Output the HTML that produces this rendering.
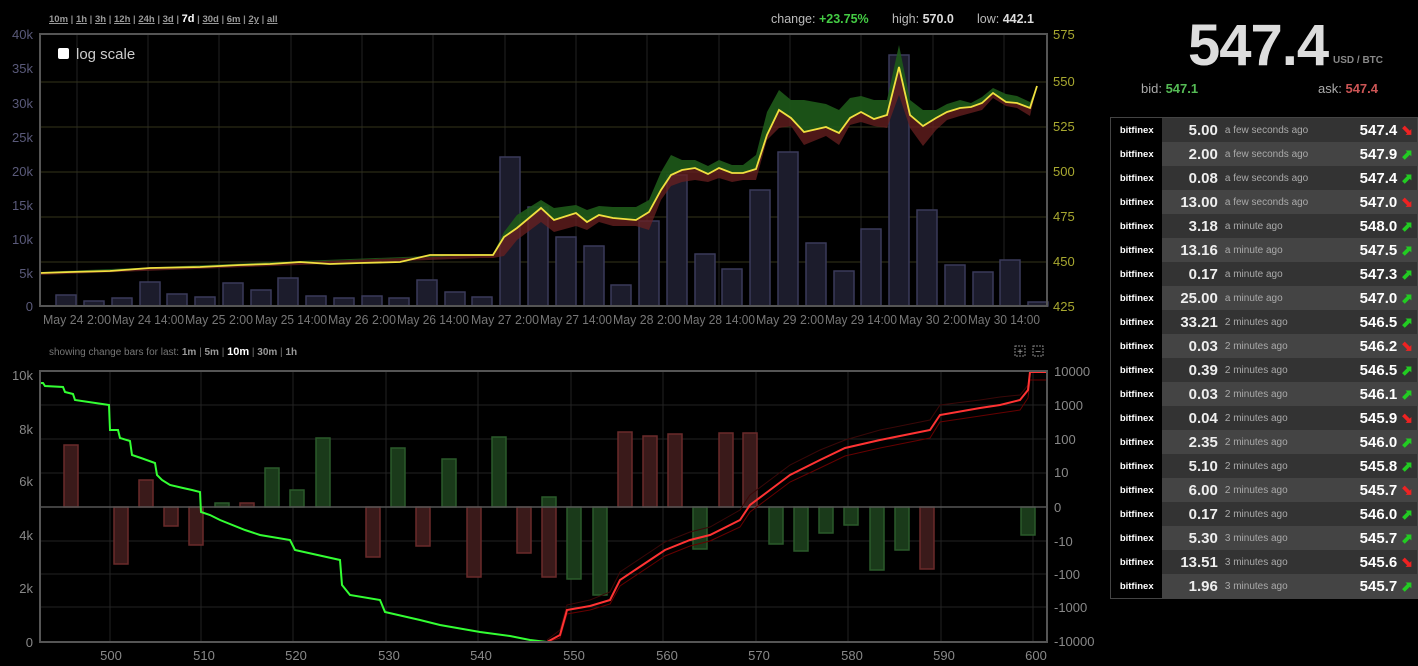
<!DOCTYPE html>
<html><head><meta charset="utf-8"><style>
body{margin:0;width:1418px;height:666px;background:#000;overflow:hidden;font-family:"Liberation Sans",sans-serif;position:relative}
.abs{position:absolute}
.rng{left:49px;top:13px;font-size:9.5px;color:#888;font-weight:bold}
.rng u{color:#999}
.rng b{color:#fff;font-size:11px;text-decoration:none}
.stat{top:12px;font-size:12.5px;color:#bbb}
table{border-collapse:collapse}
td{height:24px;padding:0;white-space:nowrap}
.n{width:52px;background:#000;color:#fff;font-weight:bold;font-size:9.5px;text-align:center}
.a{width:56px;text-align:right;color:#eee;font-weight:bold;font-size:15px}
.t{width:100px;color:#aaa;font-size:10px;padding-left:7px}
.p{width:74px;text-align:right;color:#fff;font-weight:bold;font-size:15px}
.r{width:20px;text-align:center;font-size:14px;font-weight:bold}
tr:nth-child(odd) .a,tr:nth-child(odd) .t,tr:nth-child(odd) .p,tr:nth-child(odd) .r{background:#333}
tr:nth-child(even) .a,tr:nth-child(even) .t,tr:nth-child(even) .p,tr:nth-child(even) .r{background:#444}
.up{color:#2c2}.dn{color:#e22}
</style></head><body>
<div class="abs rng"><u>10m</u> | <u>1h</u> | <u>3h</u> | <u>12h</u> | <u>24h</u> | <u>3d</u> | <b>7d</b> | <u>30d</u> | <u>6m</u> | <u>2y</u> | <u>all</u></div>
<div class="abs stat" style="left:771px">change: <b style="color:#4c4">+23.75%</b></div>
<div class="abs stat" style="left:892px">high: <b style="color:#ddd">570.0</b></div>
<div class="abs stat" style="left:977px">low: <b style="color:#ddd">442.1</b></div>

<svg class="abs" style="left:0;top:0" width="1100" height="666" font-family="Liberation Sans" >
<g stroke="#222" stroke-width="1">
<line x1="77" y1="34" x2="77" y2="306"/><line x1="148" y1="34" x2="148" y2="306"/><line x1="219" y1="34" x2="219" y2="306"/><line x1="291" y1="34" x2="291" y2="306"/><line x1="362" y1="34" x2="362" y2="306"/><line x1="433" y1="34" x2="433" y2="306"/><line x1="505" y1="34" x2="505" y2="306"/><line x1="576" y1="34" x2="576" y2="306"/><line x1="647" y1="34" x2="647" y2="306"/><line x1="719" y1="34" x2="719" y2="306"/><line x1="790" y1="34" x2="790" y2="306"/><line x1="861" y1="34" x2="861" y2="306"/><line x1="933" y1="34" x2="933" y2="306"/><line x1="1004" y1="34" x2="1004" y2="306"/>
</g>
<g stroke="#33331a" stroke-width="1"><line x1="40" y1="82" x2="1047" y2="82"/><line x1="40" y1="127" x2="1047" y2="127"/><line x1="40" y1="172" x2="1047" y2="172"/><line x1="40" y1="217" x2="1047" y2="217"/><line x1="40" y1="262" x2="1047" y2="262"/></g>
<g fill="#1c1c2c" stroke="#3a3a5a" stroke-width="1.5">
<rect x="56" y="295" width="20" height="11"/><rect x="84" y="301" width="20" height="5"/><rect x="112" y="298" width="20" height="8"/><rect x="140" y="282" width="20" height="24"/><rect x="167" y="294" width="20" height="12"/><rect x="195" y="297" width="20" height="9"/><rect x="223" y="283" width="20" height="23"/><rect x="251" y="290" width="20" height="16"/><rect x="278" y="278" width="20" height="28"/><rect x="306" y="296" width="20" height="10"/><rect x="334" y="298" width="20" height="8"/><rect x="362" y="296" width="20" height="10"/><rect x="389" y="298" width="20" height="8"/><rect x="417" y="280" width="20" height="26"/><rect x="445" y="292" width="20" height="14"/><rect x="472" y="297" width="20" height="9"/>
<rect x="500" y="157" width="20" height="149"/><rect x="528" y="207" width="20" height="99"/><rect x="556" y="237" width="20" height="69"/><rect x="584" y="246" width="20" height="60"/><rect x="611" y="285" width="20" height="21"/><rect x="639" y="221" width="20" height="85"/><rect x="667" y="175" width="20" height="131"/><rect x="695" y="254" width="20" height="52"/><rect x="722" y="269" width="20" height="37"/><rect x="750" y="190" width="20" height="116"/><rect x="778" y="152" width="20" height="154"/><rect x="806" y="243" width="20" height="63"/><rect x="834" y="271" width="20" height="35"/><rect x="861" y="229" width="20" height="77"/><rect x="889" y="55" width="20" height="251"/><rect x="917" y="210" width="20" height="96"/><rect x="945" y="265" width="20" height="41"/><rect x="973" y="272" width="20" height="34"/><rect x="1000" y="260" width="20" height="46"/><rect x="1028" y="302" width="20" height="4"/>
</g>
<polygon fill="#1e5a1a" opacity="0.9" points="40,272 300,261 480,254 493,254 504,232 517,215 541,200 554,208 576,205 587,210 599,206 613,207 636,207 649,200 661,172 671,155 682,160 695,160 708,166 719,160 732,165 743,165 756,155 767,112 779,90 791,100 804,100 826,104 839,110 850,98 861,96 874,100 887,100 899,45 910,100 923,110 936,110 947,104 960,100 971,103 982,97 993,88 1006,94 1017,96 1030,102 1037,86 1030,108 1017,103 1006,102 993,93 982,103 971,107 960,108 947,112 936,118 923,126 910,115 899,67 887,115 874,119 861,112 850,118 839,133 826,127 804,132 791,118 779,110 767,135 756,169 743,173 732,173 719,168 708,174 695,168 682,170 671,175 661,190 649,212 636,220 613,218 599,215 587,222 576,213 554,220 541,208 517,228 504,237 493,255 480,255 300,262 40,273"/>
<polygon fill="#6a2020" opacity="0.75" points="40,273 300,262 480,255 493,255 504,237 517,228 541,208 554,220 576,213 587,222 599,215 613,218 636,220 649,212 661,190 671,175 682,170 695,168 708,174 719,168 732,173 743,173 756,169 767,135 779,110 791,118 804,132 826,127 839,133 850,118 861,112 874,119 887,115 899,67 910,115 923,126 936,118 947,112 960,108 971,107 982,103 993,93 1006,102 1017,103 1030,108 1037,86 1030,116 1017,108 1006,106 993,98 982,110 971,113 960,116 947,120 936,130 923,146 910,128 899,95 887,128 874,126 861,122 850,125 839,145 826,136 804,145 791,126 779,128 767,140 756,180 743,180 732,182 719,178 708,182 695,180 682,182 671,186 661,200 649,230 636,226 613,226 599,222 587,230 576,226 554,232 541,222 517,240 504,256 493,258 480,258 300,265 40,275"/>
<polyline fill="none" stroke="#f0e040" stroke-width="1.8" points="40,273 70,272 110,271 150,268 200,267 240,265 270,264 300,262 330,264 360,263 400,262 430,255 480,255 493,255 504,237 517,228 541,208 554,220 576,213 587,222 599,215 613,218 636,220 649,212 661,190 671,175 682,170 695,168 708,174 719,168 732,173 743,173 756,169 767,135 779,110 791,118 804,132 826,127 839,133 850,118 861,112 874,119 887,115 899,67 910,115 923,126 936,118 947,112 960,108 971,107 982,103 993,93 1006,102 1017,103 1030,108 1037,86"/>
<path d="M40,306V34H1047V306Z" fill="none" stroke="#555" stroke-width="2"/>
<rect x="58" y="48" width="11" height="11" rx="2" fill="#fff"/>
<text x="76" y="59" fill="#ccc" font-size="15">log scale</text>
<g fill="#5a5a7a" font-size="13" text-anchor="end"><text x="33" y="39">40k</text><text x="33" y="73">35k</text><text x="33" y="108">30k</text><text x="33" y="142">25k</text><text x="33" y="176">20k</text><text x="33" y="210">15k</text><text x="33" y="244">10k</text><text x="33" y="278">5k</text><text x="33" y="311">0</text></g>
<g fill="#a8a830" font-size="13"><text x="1053" y="39">575</text><text x="1053" y="86">550</text><text x="1053" y="131">525</text><text x="1053" y="176">500</text><text x="1053" y="221">475</text><text x="1053" y="266">450</text><text x="1053" y="311">425</text></g>
<g fill="#777" font-size="12.5" text-anchor="middle" lengthAdjust="spacingAndGlyphs">
<text x="77" y="324" textLength="68" lengthAdjust="spacingAndGlyphs">May 24 2:00</text><text x="148" y="324" textLength="72" lengthAdjust="spacingAndGlyphs">May 24 14:00</text><text x="219" y="324" textLength="68" lengthAdjust="spacingAndGlyphs">May 25 2:00</text><text x="291" y="324" textLength="72" lengthAdjust="spacingAndGlyphs">May 25 14:00</text><text x="362" y="324" textLength="68" lengthAdjust="spacingAndGlyphs">May 26 2:00</text><text x="433" y="324" textLength="72" lengthAdjust="spacingAndGlyphs">May 26 14:00</text><text x="505" y="324" textLength="68" lengthAdjust="spacingAndGlyphs">May 27 2:00</text><text x="576" y="324" textLength="72" lengthAdjust="spacingAndGlyphs">May 27 14:00</text><text x="647" y="324" textLength="68" lengthAdjust="spacingAndGlyphs">May 28 2:00</text><text x="719" y="324" textLength="72" lengthAdjust="spacingAndGlyphs">May 28 14:00</text><text x="790" y="324" textLength="68" lengthAdjust="spacingAndGlyphs">May 29 2:00</text><text x="861" y="324" textLength="72" lengthAdjust="spacingAndGlyphs">May 29 14:00</text><text x="933" y="324" textLength="68" lengthAdjust="spacingAndGlyphs">May 30 2:00</text><text x="1004" y="324" textLength="72" lengthAdjust="spacingAndGlyphs">May 30 14:00</text></g>

<text x="49" y="355" fill="#777" font-size="10">showing change bars for last: <tspan fill="#999" font-weight="bold">1m</tspan> | <tspan fill="#999" font-weight="bold">5m</tspan> | <tspan fill="#fff" font-weight="bold" font-size="11">10m</tspan> | <tspan fill="#999" font-weight="bold">30m</tspan> | <tspan fill="#999" font-weight="bold">1h</tspan></text>
<rect x="1015" y="346" width="10" height="10" fill="none" stroke="#888" stroke-dasharray="2,1"/><text x="1020" y="355" fill="#aaa" font-size="10" text-anchor="middle">+</text>
<rect x="1033" y="346" width="10" height="10" fill="none" stroke="#888" stroke-dasharray="2,1"/><text x="1038" y="355" fill="#aaa" font-size="10" text-anchor="middle">−</text>

<g stroke="#222"><line x1="110" y1="371" x2="110" y2="642"/><line x1="201" y1="371" x2="201" y2="642"/><line x1="293" y1="371" x2="293" y2="642"/><line x1="386" y1="371" x2="386" y2="642"/><line x1="478" y1="371" x2="478" y2="642"/><line x1="571" y1="371" x2="571" y2="642"/><line x1="663" y1="371" x2="663" y2="642"/><line x1="756" y1="371" x2="756" y2="642"/><line x1="848" y1="371" x2="848" y2="642"/><line x1="941" y1="371" x2="941" y2="642"/><line x1="1033" y1="371" x2="1033" y2="642"/>
<line x1="40" y1="405" x2="1047" y2="405"/><line x1="40" y1="439" x2="1047" y2="439"/><line x1="40" y1="473" x2="1047" y2="473"/><line x1="40" y1="541" x2="1047" y2="541"/><line x1="40" y1="574" x2="1047" y2="574"/><line x1="40" y1="607" x2="1047" y2="607"/></g>
<g fill="#3a1a1a" stroke="#6a2a2a" stroke-width="1.5">
<rect x="64" y="445" width="14" height="62"/><rect x="139" y="480" width="14" height="27"/><rect x="240" y="503" width="14" height="4"/><rect x="618" y="432" width="14" height="75"/><rect x="643" y="436" width="14" height="71"/><rect x="668" y="434" width="14" height="73"/><rect x="719" y="433" width="14" height="74"/><rect x="743" y="433" width="14" height="74"/>
<rect x="114" y="507" width="14" height="57"/><rect x="164" y="507" width="14" height="19"/><rect x="189" y="507" width="14" height="38"/><rect x="366" y="507" width="14" height="50"/><rect x="416" y="507" width="14" height="39"/><rect x="467" y="507" width="14" height="70"/><rect x="517" y="507" width="14" height="46"/><rect x="542" y="507" width="14" height="70"/><rect x="920" y="507" width="14" height="62"/>
</g>
<g fill="#1a3a1a" stroke="#2a5a2a" stroke-width="1.5">
<rect x="215" y="503" width="14" height="4"/><rect x="265" y="468" width="14" height="39"/><rect x="290" y="490" width="14" height="17"/><rect x="316" y="438" width="14" height="69"/><rect x="391" y="448" width="14" height="59"/><rect x="442" y="459" width="14" height="48"/><rect x="492" y="437" width="14" height="70"/><rect x="542" y="497" width="14" height="10"/>
<rect x="567" y="507" width="14" height="72"/><rect x="593" y="507" width="14" height="88"/><rect x="693" y="507" width="14" height="42"/><rect x="769" y="507" width="14" height="37"/><rect x="794" y="507" width="14" height="44"/><rect x="819" y="507" width="14" height="26"/><rect x="844" y="507" width="14" height="18"/><rect x="870" y="507" width="14" height="63"/><rect x="895" y="507" width="14" height="43"/><rect x="1021" y="507" width="14" height="28"/>
</g>
<line x1="40" y1="507" x2="1047" y2="507" stroke="#555" stroke-width="1.5"/>
<polyline fill="none" stroke="#3a0808" stroke-width="1" points="547,640 560,630 567,605 590,600 610,592 620,572 650,552 665,542 690,532 710,527 740,510 750,495 770,480 790,465 820,450 845,440 880,430 930,420 940,405 980,400 1000,397 1020,395 1028,385 1030,372 1047,372"/>
<polyline fill="none" stroke="#600" stroke-width="1" points="547,642 560,638 567,614 590,610 610,604 620,586 650,566 665,556 690,546 710,541 740,527 750,512 770,497 790,482 820,468 845,456 880,448 930,438 940,422 980,416 1000,413 1020,410 1028,398 1030,380 1047,380"/>
<polyline fill="none" stroke="#3f3" stroke-width="2" points="40,383 43,383 45,386 63,387 65,392 73,394 75,400 109,405 110,430 118,430 120,438 130,441 132,455 141,458 155,463 157,475 162,480 170,485 183,488 192,490 200,492 201,512 210,515 220,520 245,530 260,535 290,540 295,550 340,560 342,585 350,595 380,600 385,612 420,620 440,625 480,632 510,636 530,640 547,642"/>
<polyline fill="none" stroke="#f33" stroke-width="2" points="547,642 560,635 567,610 590,606 610,600 620,580 650,560 665,550 690,540 710,535 740,520 750,505 770,490 790,475 820,460 845,448 880,440 930,430 940,415 980,408 1000,405 1020,400 1028,390 1030,372 1047,372"/>
<path d="M40,642V371H1047V642Z" fill="none" stroke="#555" stroke-width="2"/>
<g fill="#888" font-size="13" text-anchor="end"><text x="33" y="380">10k</text><text x="33" y="434">8k</text><text x="33" y="486">6k</text><text x="33" y="540">4k</text><text x="33" y="593">2k</text><text x="33" y="647">0</text></g>
<g fill="#888" font-size="13"><text x="1054" y="376">10000</text><text x="1054" y="410">1000</text><text x="1054" y="444">100</text><text x="1054" y="477">10</text><text x="1054" y="512">0</text><text x="1054" y="546">-10</text><text x="1054" y="579">-100</text><text x="1054" y="612">-1000</text><text x="1054" y="646">-10000</text></g>
<g fill="#888" font-size="13" text-anchor="middle"><text x="111" y="660">500</text><text x="204" y="660">510</text><text x="296" y="660">520</text><text x="389" y="660">530</text><text x="481" y="660">540</text><text x="574" y="660">550</text><text x="667" y="660">560</text><text x="759" y="660">570</text><text x="852" y="660">580</text><text x="944" y="660">590</text><text x="1036" y="660">600</text></g>
</svg>

<div class="abs" style="left:1188px;top:12px;font-size:58px;font-weight:bold;color:#ddd;letter-spacing:-1px">547.4</div>
<div class="abs" style="left:1333px;top:55px;font-size:10px;font-weight:bold;color:#888">USD / BTC</div>
<div class="abs" style="left:1141px;top:81px;font-size:13px;color:#aaa">bid: <b style="color:#5b5">547.1</b></div>
<div class="abs" style="left:1318px;top:81px;font-size:13px;color:#aaa">ask: <b style="color:#c55">547.4</b></div>
<table class="abs" style="left:1110px;top:117px;border:1px solid #444">
<tr><td class="n">bitfinex</td><td class="a">5.00</td><td class="t">a few seconds ago</td><td class="p">547.4</td><td class="r dn">⬊</td></tr>
<tr><td class="n">bitfinex</td><td class="a">2.00</td><td class="t">a few seconds ago</td><td class="p">547.9</td><td class="r up">⬈</td></tr>
<tr><td class="n">bitfinex</td><td class="a">0.08</td><td class="t">a few seconds ago</td><td class="p">547.4</td><td class="r up">⬈</td></tr>
<tr><td class="n">bitfinex</td><td class="a">13.00</td><td class="t">a few seconds ago</td><td class="p">547.0</td><td class="r dn">⬊</td></tr>
<tr><td class="n">bitfinex</td><td class="a">3.18</td><td class="t">a minute ago</td><td class="p">548.0</td><td class="r up">⬈</td></tr>
<tr><td class="n">bitfinex</td><td class="a">13.16</td><td class="t">a minute ago</td><td class="p">547.5</td><td class="r up">⬈</td></tr>
<tr><td class="n">bitfinex</td><td class="a">0.17</td><td class="t">a minute ago</td><td class="p">547.3</td><td class="r up">⬈</td></tr>
<tr><td class="n">bitfinex</td><td class="a">25.00</td><td class="t">a minute ago</td><td class="p">547.0</td><td class="r up">⬈</td></tr>
<tr><td class="n">bitfinex</td><td class="a">33.21</td><td class="t">2 minutes ago</td><td class="p">546.5</td><td class="r up">⬈</td></tr>
<tr><td class="n">bitfinex</td><td class="a">0.03</td><td class="t">2 minutes ago</td><td class="p">546.2</td><td class="r dn">⬊</td></tr>
<tr><td class="n">bitfinex</td><td class="a">0.39</td><td class="t">2 minutes ago</td><td class="p">546.5</td><td class="r up">⬈</td></tr>
<tr><td class="n">bitfinex</td><td class="a">0.03</td><td class="t">2 minutes ago</td><td class="p">546.1</td><td class="r up">⬈</td></tr>
<tr><td class="n">bitfinex</td><td class="a">0.04</td><td class="t">2 minutes ago</td><td class="p">545.9</td><td class="r dn">⬊</td></tr>
<tr><td class="n">bitfinex</td><td class="a">2.35</td><td class="t">2 minutes ago</td><td class="p">546.0</td><td class="r up">⬈</td></tr>
<tr><td class="n">bitfinex</td><td class="a">5.10</td><td class="t">2 minutes ago</td><td class="p">545.8</td><td class="r up">⬈</td></tr>
<tr><td class="n">bitfinex</td><td class="a">6.00</td><td class="t">2 minutes ago</td><td class="p">545.7</td><td class="r dn">⬊</td></tr>
<tr><td class="n">bitfinex</td><td class="a">0.17</td><td class="t">2 minutes ago</td><td class="p">546.0</td><td class="r up">⬈</td></tr>
<tr><td class="n">bitfinex</td><td class="a">5.30</td><td class="t">3 minutes ago</td><td class="p">545.7</td><td class="r up">⬈</td></tr>
<tr><td class="n">bitfinex</td><td class="a">13.51</td><td class="t">3 minutes ago</td><td class="p">545.6</td><td class="r dn">⬊</td></tr>
<tr><td class="n">bitfinex</td><td class="a">1.96</td><td class="t">3 minutes ago</td><td class="p">545.7</td><td class="r up">⬈</td></tr>
</table>
</body></html>
